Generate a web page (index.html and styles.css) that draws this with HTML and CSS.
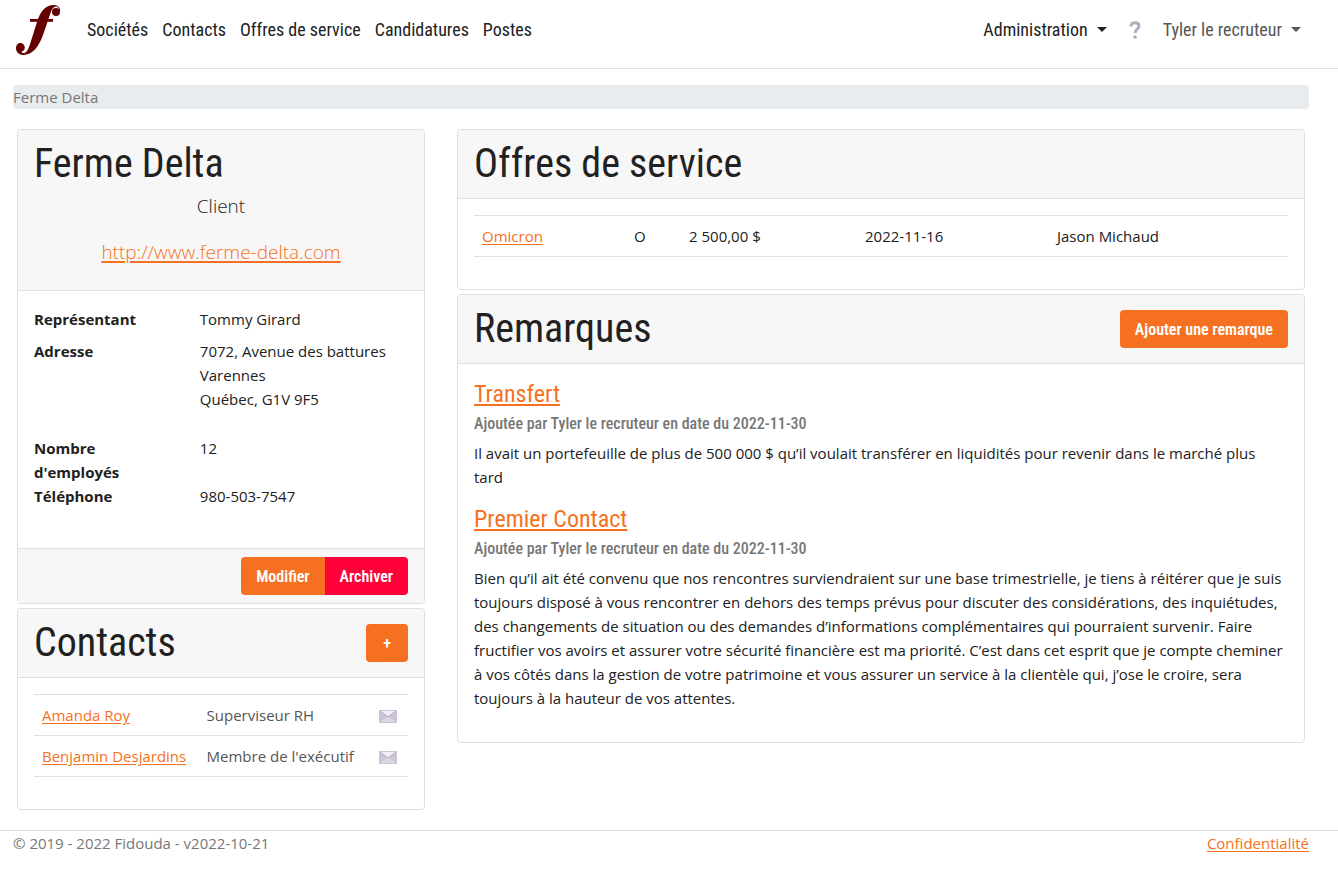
FILE: index.html
```html
<!DOCTYPE html>
<html lang="fr">
<head>
<meta charset="utf-8">
<meta name="viewport" content="width=device-width, initial-scale=1">
<title>Ferme Delta - Fidouda</title>
<link rel="stylesheet" href="styles.css">
</head>
<body>
<header class="navbar">
  <a class="brand" href="#" aria-label="Fidouda">
    <svg class="logo" viewBox="0 0 46 52" aria-hidden="true">
      <path d="M14 15h23v2.800H14z"/>
      <circle cx="4.400" cy="43.500" r="4.400"/>
      <circle cx="40" cy="8" r="4"/>
      <path d="M0 44C0 48 3 51 7 51C17 51 23 42 27 31L33.500 12C35.500 6 37 2.500 40 2.500C42 2.500 43 4 43 6L44 8C45 4 42 1 38 1C29 1 24 8 21 18L15 37C13 44 11 49 8 49C5 49 5 48 7 46Z"/>
    </svg>
  </a>
  <nav class="nav nav-main">
    <a href="#">Sociétés</a>
    <a href="#">Contacts</a>
    <a href="#">Offres de service</a>
    <a href="#">Candidatures</a>
    <a href="#">Postes</a>
  </nav>
  <nav class="nav nav-user">
    <button type="button" class="dropdown">Administration</button>
    <a class="help" href="#" aria-label="Aide">
      <svg class="help-icon" viewBox="0 0 12 18" aria-hidden="true">
        <path d="M2 5.500C2 3 3.700 1.800 6 1.800C8.500 1.800 10 3.200 10 5.200C10 8 6.200 7.800 6.200 12"/>
        <circle cx="6" cy="16" r="1.800"/>
      </svg>
    </a>
    <button type="button" class="dropdown dropdown-muted">Tyler le recruteur</button>
  </nav>
</header>

<main class="page">
  <div class="breadcrumb">Ferme Delta</div>
  <div class="columns">
    <div class="column">
      <section class="card">
        <div class="card-header card-header-company">
          <h1 class="title">Ferme Delta</h1>
          <p class="lead">Client</p>
          <p class="lead"><a href="#">http://www.ferme-delta.com</a></p>
        </div>
        <dl class="details">
          <dt>Représentant</dt><dd class="spaced">Tommy Girard</dd>
          <dt>Adresse</dt><dd class="address">7072, Avenue des battures<br>Varennes<br>Québec, G1V 9F5</dd>
          <dt>Nombre d'employés</dt><dd>12</dd>
          <dt>Téléphone</dt><dd>980-503-7547</dd>
        </dl>
        <div class="card-footer">
          <button type="button" class="btn btn-first">Modifier</button>
          <button type="button" class="btn btn-danger">Archiver</button>
        </div>
      </section>
      <section class="card">
        <div class="card-header">
          <h2 class="title">Contacts</h2>
          <button type="button" class="btn">+</button>
        </div>
        <div class="card-body">
          <table class="table contacts">
            <tr>
              <td class="name"><a href="#">Amanda Roy</a></td>
              <td>Superviseur RH</td>
              <td class="mail"><a href="#" aria-label="Écrire à Amanda Roy"><svg class="mail-icon" viewBox="0 0 18 13" aria-hidden="true"><path fill="#cbc3d6" d="M0 0h18v13H0z"/><path fill="#ded5e9" d="M1 12L9 6L17 12z"/><path fill="#f1ecf6" d="M1 1h16L9 7z"/><path class="fold" d="M1 1L9 7L17 1"/></svg></a></td>
            </tr>
            <tr>
              <td class="name"><a href="#">Benjamin Desjardins</a></td>
              <td>Membre de l'exécutif</td>
              <td class="mail"><a href="#" aria-label="Écrire à Benjamin Desjardins"><svg class="mail-icon" viewBox="0 0 18 13" aria-hidden="true"><path fill="#cbc3d6" d="M0 0h18v13H0z"/><path fill="#ded5e9" d="M1 12L9 6L17 12z"/><path fill="#f1ecf6" d="M1 1h16L9 7z"/><path class="fold" d="M1 1L9 7L17 1"/></svg></a></td>
            </tr>
          </table>
        </div>
      </section>
    </div>

    <div class="column">
      <section class="card">
        <div class="card-header">
          <h2 class="title">Offres de service</h2>
        </div>
        <div class="card-body">
          <table class="table offers">
            <colgroup><col class="c-offer"><col class="c-status"><col class="c-amount"><col class="c-date"><col></colgroup>
            <tr>
              <td><a href="#">Omicron</a></td>
              <td>O</td>
              <td>2 500,00 $</td>
              <td>2022-11-16</td>
              <td>Jason Michaud</td>
            </tr>
          </table>
        </div>
      </section>
      <section class="card">
        <div class="card-header">
          <h2 class="title">Remarques</h2>
          <button type="button" class="btn">Ajouter une remarque</button>
        </div>
        <div class="card-body">
          <article class="note">
            <h3 class="note-title"><a href="#">Transfert</a></h3>
            <p class="note-meta">Ajoutée par Tyler le recruteur en date du 2022-11-30</p>
            <p class="note-text">Il avait un portefeuille de plus de 500 000 $ qu’il voulait transférer en liquidités pour revenir dans le marché plus tard</p>
          </article>
          <article class="note">
            <h3 class="note-title"><a href="#">Premier Contact</a></h3>
            <p class="note-meta">Ajoutée par Tyler le recruteur en date du 2022-11-30</p>
            <p class="note-text">Bien qu’il ait été convenu que nos rencontres surviendraient sur une base trimestrielle, je tiens à réitérer que je suis toujours disposé à vous rencontrer en dehors des temps prévus pour discuter des considérations, des inquiétudes, des changements de situation ou des demandes d’informations complémentaires qui pourraient survenir. Faire fructifier vos avoirs et assurer votre sécurité financière est ma priorité. C’est dans cet esprit que je compte cheminer à vos côtés dans la gestion de votre patrimoine et vous assurer un service à la clientèle qui, j’ose le croire, sera toujours à la hauteur de vos attentes.</p>
          </article>
        </div>
      </section>
    </div>
  </div>
</main>

<footer class="footer">
  <span>© 2019 - 2022 Fidouda - v2022-10-21</span>
  <a href="#">Confidentialité</a>
</footer>
</body>
</html>
```

FILE: styles.css
```css
:root {
  --orange: #f57121;
  --text: #212121;
  --muted: #777;
  --line: #dee2e6;
  --condensed: "Roboto Condensed", "Arial Narrow", "Liberation Sans Narrow", "Liberation Sans", sans-serif;
}

* {
  box-sizing: border-box;
}

body {
  margin: 0;
  color: var(--text);
  background: #fff;
  font: 400 15px/24px "Open Sans", "Noto Sans", sans-serif;
}

h1, h2, h3, p, dl, dd {
  margin: 0;
}

a {
  color: var(--orange);
  text-underline-offset: 2px;
}

.navbar {
  display: flex;
  align-items: center;
  min-height: 69px;
  padding: 0 29px 8px 16px;
  border-bottom: 1px solid var(--line);
}

.brand {
  display: flex;
  margin-right: 25px;
}

.logo {
  width: 46px;
  height: 52px;
  fill: #640000;
}

.nav {
  display: flex;
  align-items: center;
  gap: 14px;
  font: 400 18px/24px var(--condensed);
}

.nav a {
  color: var(--text);
  text-decoration: none;
}

.nav-user {
  margin-left: auto;
  gap: 22px;
}

.dropdown {
  display: flex;
  align-items: center;
  gap: 9px;
  padding: 0;
  border: 0;
  background: none;
  color: var(--text);
  font: inherit;
}

.dropdown::after {
  content: "";
  margin-bottom: 2px;
  border: 5px solid transparent;
  border-top-color: currentColor;
  border-bottom: 0;
}

.dropdown-muted {
  padding-right: 8px;
  color: #555;
}

.help {
  display: flex;
}

.help-icon {
  width: 12px;
  height: 18px;
  fill: none;
  stroke: #b5aac2;
  stroke-width: 3;
}

.help-icon circle {
  fill: #b5aac2;
  stroke: none;
}

.page {
  padding: 16px 29px 20px 13px;
}

.breadcrumb {
  border-radius: 4px;
  background: #e9ecef;
  color: var(--muted);
}

.columns {
  display: grid;
  grid-template-columns: 51fr 106fr;
  gap: 32px;
  align-items: start;
  padding: 20px 4px 0;
}

.column {
  display: grid;
  gap: 4px;
  min-width: 0;
}

.card {
  overflow: hidden;
  border: 1px solid #dfdfdf;
  border-radius: 4px;
}

.card-header {
  display: flex;
  align-items: center;
  justify-content: space-between;
  min-height: 69px;
  padding: 8px 16px;
  border-bottom: 1px solid #dfdfdf;
  background: #f7f7f7;
}

.title {
  font: 400 40px/52px var(--condensed);
}

.card-header-company {
  display: block;
  padding-bottom: 23px;
}

.card-header-company .title {
  margin-bottom: 1px;
}

.lead {
  font-size: 19px;
  font-weight: 300;
  line-height: 30px;
  text-align: center;
}

.lead + .lead {
  margin-top: 16px;
}

.lead a,
.note-title a {
  text-decoration-thickness: 2px;
}

.details {
  display: grid;
  grid-template-columns: 5fr 7fr;
  padding: 16px 16px 40px;
}

.details dt {
  padding-right: 32px;
  font-weight: 700;
}

.details dd {
  padding-left: 10px;
}

.spaced {
  margin-bottom: 8px;
}

.address {
  margin-bottom: 25px;
}

.card-footer {
  display: flex;
  justify-content: flex-end;
  padding: 8px 16px;
  border-top: 1px solid #dfdfdf;
  background: #f7f7f7;
}

.btn {
  min-width: 42px;
  padding: 8px 15px 6px;
  border: 0;
  border-radius: 4px;
  background: var(--orange);
  color: #fff;
  font: 600 16px/24px var(--condensed);
}

.btn-first {
  border-radius: 4px 0 0 4px;
}

.btn-danger {
  border-radius: 0 4px 4px 0;
  background: #ff0039;
}

.card-body {
  padding: 16px;
}

.table {
  width: 100%;
  margin-bottom: 16px;
  border-collapse: collapse;
}

.table td {
  padding: 8px;
  border-top: 1px solid var(--line);
  border-bottom: 1px solid var(--line);
}

.contacts {
  table-layout: fixed;
  color: #555;
}

.name {
  width: 44%;
}

.mail {
  width: 40px;
}

.mail a {
  display: flex;
  justify-content: center;
  padding-top: 3px;
}

.mail-icon {
  width: 18px;
  height: 13px;
}

.fold {
  fill: none;
  stroke: #b3aabf;
}

.offers {
  table-layout: fixed;
}

.c-offer {
  width: 152px;
}

.c-status {
  width: 55px;
}

.c-amount {
  width: 176px;
}

.c-date {
  width: 192px;
}

.note {
  margin-bottom: 16px;
}

.note-title {
  font: 400 24px/29px var(--condensed);
}

.note-meta {
  margin: 5px 0 7px;
  color: var(--muted);
  font: 500 16px/20px var(--condensed);
}

.footer {
  display: flex;
  justify-content: space-between;
  padding: 0 29px 0 13px;
  border-top: 1px solid var(--line);
  color: var(--muted);
}
```
